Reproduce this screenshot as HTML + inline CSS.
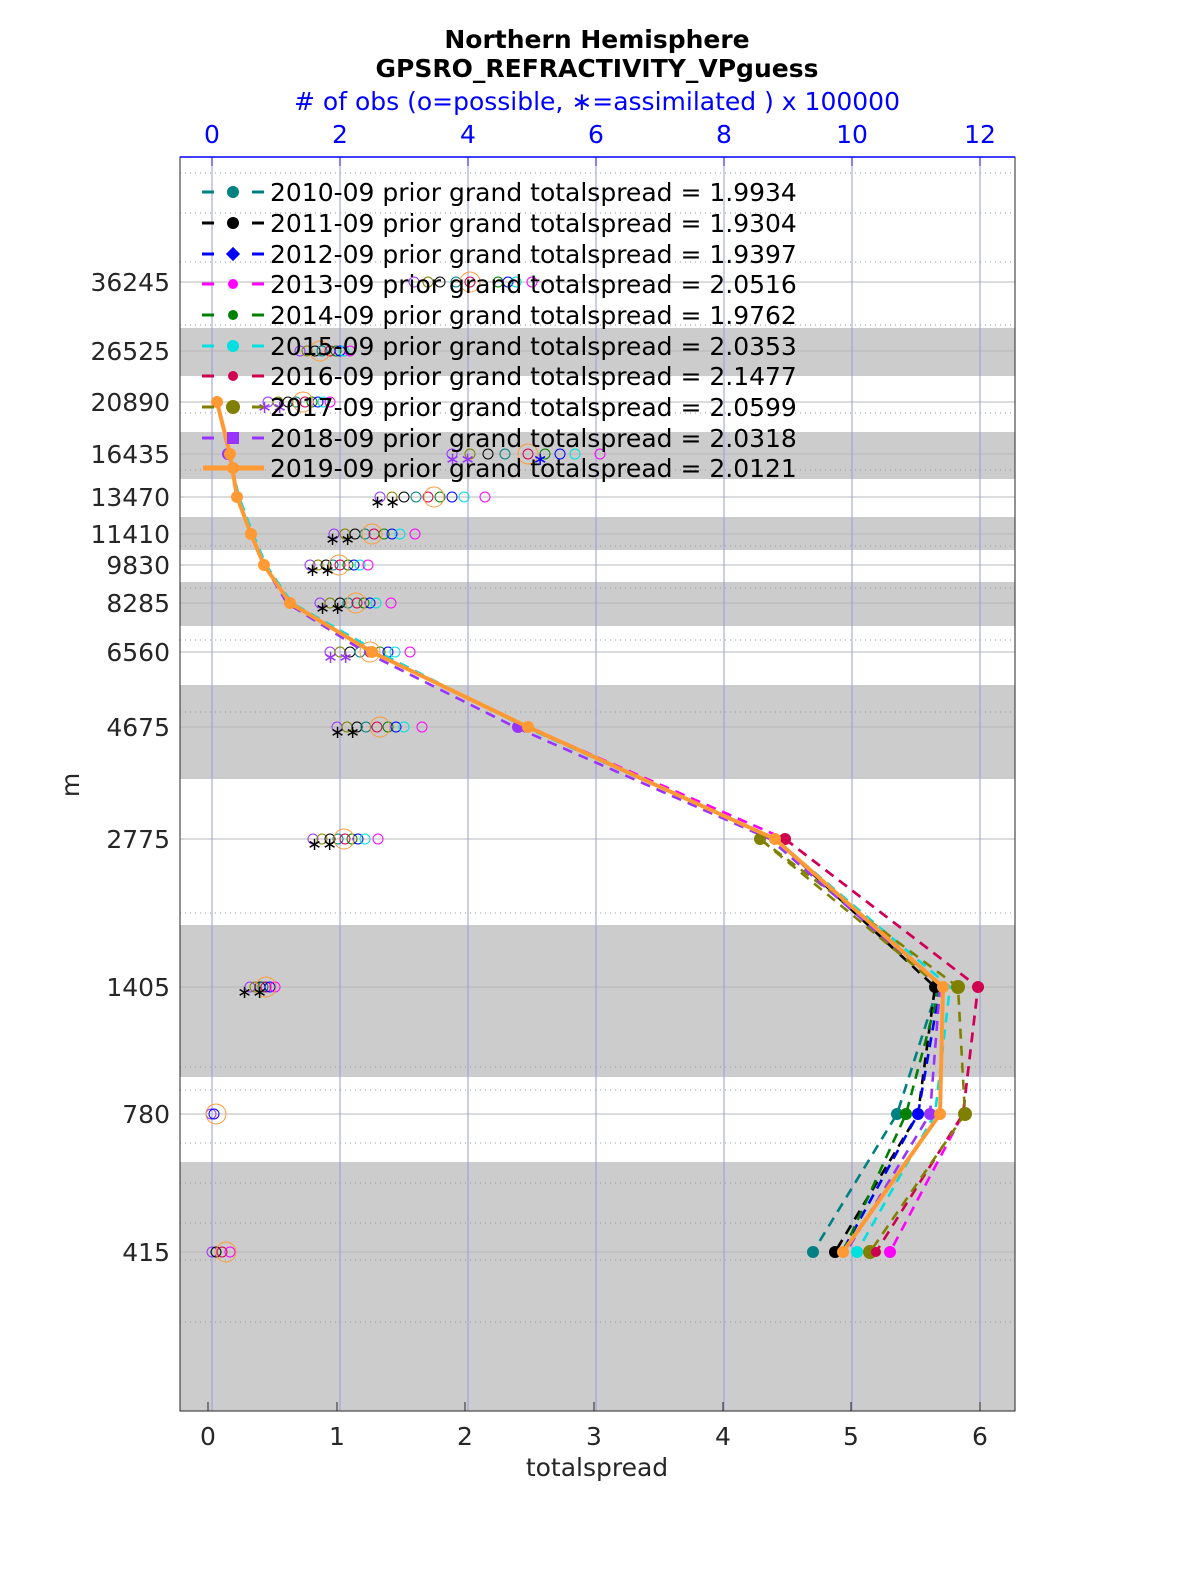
<!DOCTYPE html>
<html><head><meta charset="utf-8"><style>
html,body{margin:0;padding:0;background:#fff;width:1200px;height:1575px;overflow:hidden}
svg text{font-family:"DejaVu Sans","Liberation Sans",sans-serif}
</style></head><body>
<svg width="1200" height="1575" viewBox="0 0 1200 1575" xmlns="http://www.w3.org/2000/svg">
<rect width="1200" height="1575" fill="#fff"/>
<text x="597" y="48" font-size="25" font-weight="bold" text-anchor="middle">Northern Hemisphere</text>
<text x="597" y="77" font-size="25" font-weight="bold" text-anchor="middle">GPSRO_REFRACTIVITY_VPguess</text>
<text x="597" y="110" font-size="25" fill="#0000ff" text-anchor="middle"># of obs (o=possible, ∗=assimilated ) x 100000</text>
<g font-size="25" fill="#0000ff" text-anchor="middle">
<text x="212" y="143">0</text><text x="340" y="143">2</text><text x="468" y="143">4</text><text x="596" y="143">6</text><text x="724" y="143">8</text><text x="852" y="143">10</text><text x="980" y="143">12</text>
</g>
<g fill="#cccccc">
<rect x="180" y="328" width="835" height="48"/>
<rect x="180" y="432" width="835" height="47"/>
<rect x="180" y="517" width="835" height="33"/>
<rect x="180" y="582" width="835" height="44"/>
<rect x="180" y="685" width="835" height="94"/>
<rect x="180" y="925" width="835" height="152"/>
<rect x="180" y="1162" width="835" height="249"/>
</g>
<g stroke="#999" stroke-width="1" stroke-dasharray="1,4">
<line x1="180" y1="173" x2="1015" y2="173"/><line x1="180" y1="213" x2="1015" y2="213"/><line x1="180" y1="262" x2="1015" y2="262"/><line x1="180" y1="325" x2="1015" y2="325"/><line x1="180" y1="413" x2="1015" y2="413"/><line x1="180" y1="470" x2="1015" y2="470"/><line x1="180" y1="546" x2="1015" y2="546"/><line x1="180" y1="588" x2="1015" y2="588"/><line x1="180" y1="640" x2="1015" y2="640"/><line x1="180" y1="712" x2="1015" y2="712"/><line x1="180" y1="913" x2="1015" y2="913"/><line x1="180" y1="1067" x2="1015" y2="1067"/><line x1="180" y1="1090" x2="1015" y2="1090"/><line x1="180" y1="1143" x2="1015" y2="1143"/><line x1="180" y1="1183" x2="1015" y2="1183"/><line x1="180" y1="1223" x2="1015" y2="1223"/><line x1="180" y1="1260" x2="1015" y2="1260"/><line x1="180" y1="1322" x2="1015" y2="1322"/>
</g>
<g stroke="#b8b8b8" stroke-width="1">
<line x1="180" y1="282" x2="1015" y2="282"/><line x1="180" y1="351" x2="1015" y2="351"/><line x1="180" y1="402" x2="1015" y2="402"/><line x1="180" y1="454" x2="1015" y2="454"/><line x1="180" y1="497" x2="1015" y2="497"/><line x1="180" y1="534" x2="1015" y2="534"/><line x1="180" y1="565" x2="1015" y2="565"/><line x1="180" y1="603" x2="1015" y2="603"/><line x1="180" y1="652" x2="1015" y2="652"/><line x1="180" y1="727" x2="1015" y2="727"/><line x1="180" y1="839" x2="1015" y2="839"/><line x1="180" y1="987" x2="1015" y2="987"/><line x1="180" y1="1114" x2="1015" y2="1114"/><line x1="180" y1="1252" x2="1015" y2="1252"/>
</g>
<g stroke="#9a9ad8" stroke-width="1">
<line x1="212" y1="157" x2="212" y2="1411"/><line x1="340" y1="157" x2="340" y2="1411"/><line x1="468" y1="157" x2="468" y2="1411"/><line x1="596" y1="157" x2="596" y2="1411"/><line x1="724" y1="157" x2="724" y2="1411"/><line x1="852" y1="157" x2="852" y2="1411"/><line x1="980" y1="157" x2="980" y2="1411"/>
</g>
<rect x="180" y="157" width="835" height="1254" fill="none" stroke="#262626" stroke-width="1"/>
<line x1="180" y1="157" x2="1015" y2="157" stroke="#0000ff" stroke-width="1.5"/>
<g stroke="#0000ff"><line x1="212" y1="157" x2="212" y2="166"/><line x1="340" y1="157" x2="340" y2="166"/><line x1="468" y1="157" x2="468" y2="166"/><line x1="596" y1="157" x2="596" y2="166"/><line x1="724" y1="157" x2="724" y2="166"/><line x1="852" y1="157" x2="852" y2="166"/><line x1="980" y1="157" x2="980" y2="166"/></g>
<g stroke="#262626"><line x1="208" y1="1411" x2="208" y2="1402"/><line x1="337" y1="1411" x2="337" y2="1402"/><line x1="465" y1="1411" x2="465" y2="1402"/><line x1="594" y1="1411" x2="594" y2="1402"/><line x1="723" y1="1411" x2="723" y2="1402"/><line x1="851" y1="1411" x2="851" y2="1402"/><line x1="980" y1="1411" x2="980" y2="1402"/></g>
<g font-size="25" fill="#262626" text-anchor="end">
<text x="170" y="291">36245</text><text x="170" y="360">26525</text><text x="170" y="411">20890</text><text x="170" y="463">16435</text><text x="170" y="506">13470</text><text x="170" y="543">11410</text><text x="170" y="574">9830</text><text x="170" y="612">8285</text><text x="170" y="661">6560</text><text x="170" y="736">4675</text><text x="170" y="848">2775</text><text x="170" y="996">1405</text><text x="170" y="1123">780</text><text x="170" y="1261">415</text>
</g>
<text transform="translate(79,785) rotate(-90)" font-size="25" fill="#262626" text-anchor="middle">m</text>
<g font-size="25" fill="#262626" text-anchor="middle">
<text x="208" y="1445">0</text><text x="337" y="1445">1</text><text x="465" y="1445">2</text><text x="594" y="1445">3</text><text x="723" y="1445">4</text><text x="851" y="1445">5</text><text x="980" y="1445">6</text>
<text x="597" y="1476">totalspread</text>
</g>
<g fill="none" stroke-width="1">
<g stroke="#9933ff"><circle cx="414" cy="282" r="5"/><circle cx="300" cy="351" r="5"/><circle cx="268" cy="402" r="5"/><circle cx="452" cy="454" r="5"/><circle cx="380" cy="497" r="5"/><circle cx="334" cy="534" r="5"/><circle cx="310" cy="565" r="5"/><circle cx="320" cy="603" r="5"/><circle cx="330" cy="652" r="5"/><circle cx="337" cy="727" r="5"/><circle cx="313" cy="839" r="5"/><circle cx="250" cy="987" r="5"/><circle cx="211" cy="1114" r="5"/><circle cx="212" cy="1252" r="5"/></g>
<g stroke="#808000"><circle cx="428" cy="282" r="5"/><circle cx="307" cy="351" r="5"/><circle cx="278" cy="402" r="5"/><circle cx="470" cy="454" r="5"/><circle cx="392" cy="497" r="5"/><circle cx="345" cy="534" r="5"/><circle cx="318" cy="565" r="5"/><circle cx="330" cy="603" r="5"/><circle cx="340" cy="652" r="5"/><circle cx="347" cy="727" r="5"/><circle cx="322" cy="839" r="5"/><circle cx="255" cy="987" r="5"/></g>
<g stroke="#000"><circle cx="440" cy="282" r="5"/><circle cx="315" cy="351" r="5"/><circle cx="288" cy="402" r="5"/><circle cx="488" cy="454" r="5"/><circle cx="404" cy="497" r="5"/><circle cx="355" cy="534" r="5"/><circle cx="326" cy="565" r="5"/><circle cx="340" cy="603" r="5"/><circle cx="350" cy="652" r="5"/><circle cx="357" cy="727" r="5"/><circle cx="330" cy="839" r="5"/><circle cx="260" cy="987" r="5"/><circle cx="216" cy="1252" r="5"/></g>
<g stroke="#008080"><circle cx="456" cy="282" r="5"/><circle cx="322" cy="351" r="5"/><circle cx="296" cy="402" r="5"/><circle cx="505" cy="454" r="5"/><circle cx="416" cy="497" r="5"/><circle cx="365" cy="534" r="5"/><circle cx="333" cy="565" r="5"/><circle cx="348" cy="603" r="5"/><circle cx="360" cy="652" r="5"/><circle cx="366" cy="727" r="5"/><circle cx="338" cy="839" r="5"/><circle cx="263" cy="987" r="5"/></g>
<g stroke="#d00050"><circle cx="470" cy="282" r="5"/><circle cx="330" cy="351" r="5"/><circle cx="305" cy="402" r="5"/><circle cx="528" cy="454" r="5"/><circle cx="428" cy="497" r="5"/><circle cx="374" cy="534" r="5"/><circle cx="340" cy="565" r="5"/><circle cx="357" cy="603" r="5"/><circle cx="370" cy="652" r="5"/><circle cx="377" cy="727" r="5"/><circle cx="345" cy="839" r="5"/><circle cx="266" cy="987" r="5"/><circle cx="222" cy="1252" r="5"/></g>
<g stroke="#008000"><circle cx="498" cy="282" r="5"/><circle cx="336" cy="351" r="5"/><circle cx="312" cy="402" r="5"/><circle cx="545" cy="454" r="5"/><circle cx="440" cy="497" r="5"/><circle cx="384" cy="534" r="5"/><circle cx="348" cy="565" r="5"/><circle cx="364" cy="603" r="5"/><circle cx="380" cy="652" r="5"/><circle cx="388" cy="727" r="5"/><circle cx="352" cy="839" r="5"/></g>
<g stroke="#0000ff"><circle cx="508" cy="282" r="5"/><circle cx="340" cy="351" r="5"/><circle cx="318" cy="402" r="5"/><circle cx="560" cy="454" r="5"/><circle cx="452" cy="497" r="5"/><circle cx="392" cy="534" r="5"/><circle cx="354" cy="565" r="5"/><circle cx="370" cy="603" r="5"/><circle cx="388" cy="652" r="5"/><circle cx="396" cy="727" r="5"/><circle cx="358" cy="839" r="5"/><circle cx="270" cy="987" r="5"/><circle cx="214" cy="1114" r="5"/></g>
<g stroke="#00e0e0"><circle cx="516" cy="282" r="5"/><circle cx="344" cy="351" r="5"/><circle cx="323" cy="402" r="5"/><circle cx="575" cy="454" r="5"/><circle cx="464" cy="497" r="5"/><circle cx="400" cy="534" r="5"/><circle cx="360" cy="565" r="5"/><circle cx="376" cy="603" r="5"/><circle cx="395" cy="652" r="5"/><circle cx="404" cy="727" r="5"/><circle cx="365" cy="839" r="5"/></g>
<g stroke="#ff00ff"><circle cx="532" cy="282" r="5"/><circle cx="350" cy="351" r="5"/><circle cx="330" cy="402" r="5"/><circle cx="600" cy="454" r="5"/><circle cx="485" cy="497" r="5"/><circle cx="415" cy="534" r="5"/><circle cx="368" cy="565" r="5"/><circle cx="391" cy="603" r="5"/><circle cx="410" cy="652" r="5"/><circle cx="422" cy="727" r="5"/><circle cx="378" cy="839" r="5"/><circle cx="275" cy="987" r="5"/><circle cx="230" cy="1252" r="5"/></g>
<g stroke="#ff9933"><circle cx="470" cy="282" r="10"/><circle cx="320" cy="351" r="10"/><circle cx="303" cy="402" r="10"/><circle cx="528" cy="454" r="10"/><circle cx="434" cy="497" r="10"/><circle cx="372" cy="534" r="10"/><circle cx="339" cy="565" r="10"/><circle cx="356" cy="603" r="10"/><circle cx="370" cy="652" r="10"/><circle cx="380" cy="727" r="10"/><circle cx="344" cy="839" r="10"/><circle cx="266" cy="987" r="10"/><circle cx="216" cy="1114" r="10"/><circle cx="226" cy="1252" r="10"/></g>
</g>
<g font-size="18" text-anchor="middle">
<text x="460" y="465" fill="#9933ff">∗∗</text><text x="540" y="465" fill="#0000ff">∗</text>
<text x="272" y="413" fill="#9933ff">∗∗</text><text x="385" y="508" fill="#000">∗∗</text><text x="340" y="545" fill="#000">∗∗</text><text x="320" y="576" fill="#000">∗∗</text><text x="330" y="614" fill="#000">∗∗</text><text x="338" y="663" fill="#9933ff">∗∗</text><text x="345" y="738" fill="#000">∗∗</text><text x="322" y="850" fill="#000">∗∗</text><text x="252" y="998" fill="#000">∗∗</text>
</g>
<g fill="none" stroke-width="2.6" stroke-dasharray="10,7">
<polyline stroke="#008080" points="938,987 897,1114 813,1252"/>
<polyline stroke="#000" points="775,839 935,987 918,1114 835,1252"/>
<polyline stroke="#0000ff" points="940,987 918,1114 842,1252"/>
<polyline stroke="#ff00ff" points="785,839 978,987 963,1114 890,1252"/>
<polyline stroke="#008000" points="940,987 906,1114 843,1252"/>
<polyline stroke="#00e0e0" points="775,839 950,987 935,1114 857,1252"/>
<polyline stroke="#d00050" points="785,839 978,987 963,1114 876,1252"/>
<polyline stroke="#808000" points="760,839 958,987 965,1114 870,1252"/>
<polyline stroke="#9933ff" points="940,987 930,1114 846,1252"/>
<polyline stroke="#ff00ff" points="217,402 229,454 237,497 251,534 264,565 289,603 372,652 528,727 785,839"/>
<polyline stroke="#00e0e0" points="217,402 229,454 239,497 253,534 266,565 292,603 378,652 525,727 775,839"/>
<polyline stroke="#9933ff" points="217,402 229,454 237,497 251,534 264,565 287,603 365,652 515,727 770,839 940,987"/>
<polyline stroke="#808000" points="940,987 760,839"/>
</g>
<g>
<circle cx="813" cy="1252" r="6" fill="#008080"/><circle cx="897" cy="1114" r="6" fill="#008080"/>
<circle cx="835" cy="1252" r="6" fill="#000"/><circle cx="918" cy="1114" r="6" fill="#0000ff"/>
<circle cx="906" cy="1114" r="6" fill="#008000"/><circle cx="930" cy="1114" r="6" fill="#9933ff"/>
<circle cx="857" cy="1252" r="6" fill="#00e0e0"/><circle cx="870" cy="1252" r="7" fill="#808000"/>
<circle cx="876" cy="1252" r="5" fill="#d00050"/><circle cx="890" cy="1252" r="6" fill="#ff00ff"/>
<circle cx="965" cy="1114" r="7" fill="#808000"/><circle cx="958" cy="987" r="7" fill="#808000"/>
<circle cx="978" cy="987" r="6" fill="#d00050"/><circle cx="935" cy="987" r="6" fill="#000"/>
<circle cx="760" cy="839" r="6" fill="#808000"/><circle cx="785" cy="839" r="6" fill="#d00050"/>
<circle cx="518" cy="727" r="6" fill="#9933ff"/><circle cx="228" cy="454" r="6" fill="#9933ff"/>
</g>
<polyline fill="none" stroke="#ff9933" stroke-width="4" stroke-linejoin="round" points="217,402 230,454 237,497 251,534 264,565 290,603 372,652 528,727 775,839 943,987 940,1114 843,1252"/>
<g fill="#ff9933">
<circle cx="217" cy="402" r="6"/><circle cx="230" cy="454" r="6"/><circle cx="237" cy="497" r="6"/><circle cx="251" cy="534" r="6"/><circle cx="264" cy="565" r="6"/><circle cx="290" cy="603" r="6"/><circle cx="372" cy="652" r="6"/><circle cx="528" cy="727" r="6"/><circle cx="775" cy="839" r="6"/><circle cx="943" cy="987" r="6"/><circle cx="940" cy="1114" r="6"/><circle cx="843" cy="1252" r="6"/>
</g>
<g font-size="25" fill="#000">
<g stroke-width="3">
<line x1="202" y1="192" x2="214" y2="192" stroke="#008080"/><line x1="252" y1="192" x2="264" y2="192" stroke="#008080"/><circle cx="233" cy="192" r="6" fill="#008080"/>
<line x1="202" y1="223" x2="214" y2="223" stroke="#000"/><line x1="252" y1="223" x2="264" y2="223" stroke="#000"/><circle cx="233" cy="223" r="6" fill="#000"/>
<line x1="202" y1="254" x2="214" y2="254" stroke="#0000ff"/><line x1="252" y1="254" x2="264" y2="254" stroke="#0000ff"/><rect x="228" y="249" width="10" height="10" transform="rotate(45 233 254)" fill="#0000ff"/>
<line x1="202" y1="284" x2="214" y2="284" stroke="#ff00ff"/><line x1="252" y1="284" x2="264" y2="284" stroke="#ff00ff"/><circle cx="233" cy="284" r="5" fill="#ff00ff"/>
<line x1="202" y1="315" x2="214" y2="315" stroke="#008000"/><line x1="252" y1="315" x2="264" y2="315" stroke="#008000"/><circle cx="233" cy="315" r="5" fill="#008000"/>
<line x1="202" y1="346" x2="214" y2="346" stroke="#00e0e0"/><line x1="252" y1="346" x2="264" y2="346" stroke="#00e0e0"/><circle cx="233" cy="346" r="6" fill="#00e0e0"/>
<line x1="202" y1="376" x2="214" y2="376" stroke="#d00050"/><line x1="252" y1="376" x2="264" y2="376" stroke="#d00050"/><circle cx="233" cy="376" r="5" fill="#d00050"/>
<line x1="202" y1="407" x2="214" y2="407" stroke="#808000"/><line x1="252" y1="407" x2="264" y2="407" stroke="#808000"/><circle cx="233" cy="407" r="7" fill="#808000"/>
<line x1="202" y1="438" x2="214" y2="438" stroke="#9933ff"/><line x1="252" y1="438" x2="264" y2="438" stroke="#9933ff"/><rect x="227" y="432" width="12" height="12" fill="#9933ff"/>
<line x1="203" y1="468" x2="264" y2="468" stroke="#ff9933" stroke-width="5"/><circle cx="233" cy="468" r="6" fill="#ff9933"/>
</g>
<text x="270" y="201">2010-09 prior grand totalspread = 1.9934</text>
<text x="270" y="232">2011-09 prior grand totalspread = 1.9304</text>
<text x="270" y="263">2012-09 prior grand totalspread = 1.9397</text>
<text x="270" y="293">2013-09 prior grand totalspread = 2.0516</text>
<text x="270" y="324">2014-09 prior grand totalspread = 1.9762</text>
<text x="270" y="355">2015-09 prior grand totalspread = 2.0353</text>
<text x="270" y="385">2016-09 prior grand totalspread = 2.1477</text>
<text x="270" y="416">2017-09 prior grand totalspread = 2.0599</text>
<text x="270" y="447">2018-09 prior grand totalspread = 2.0318</text>
<text x="270" y="477">2019-09 prior grand totalspread = 2.0121</text>
</g>
</svg>
</body></html>
